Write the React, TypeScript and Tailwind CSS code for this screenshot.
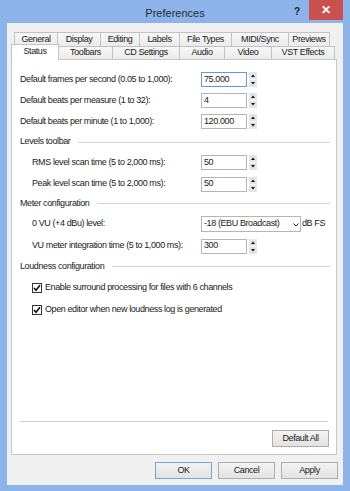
import React from "react";

const font = { fontFamily: '"Liberation Sans", Arial, sans-serif' };

function Spin() {
  return (
    <svg width="8" height="15" viewBox="0 0 8 15" className="ml-[2px] shrink-0">
      <rect x="0" y="0" width="8" height="7" fill="#e4e4e4" />
      <rect x="0" y="8" width="8" height="7" fill="#e4e4e4" />
      <path d="M2 5 L4 2.5 L6 5 Z" fill="#111" />
      <path d="M2 10 L4 12.5 L6 10 Z" fill="#111" />
    </svg>
  );
}

function NumRow({ label, value, indent = false, focus = false, h }: { label: string; value: string; indent?: boolean; focus?: boolean; h: string }) {
  return (
    <div className={`flex items-center ${h}`}>
      <div className={indent ? "w-[189px] pl-[20px]" : "w-[189px] pl-[8px]"}>{label}</div>
      <div
        className={`w-[46px] h-[15px] bg-white border flex items-center pl-[2px] ${focus ? "border-[#5a9ee0]" : "border-[#b5b5b5]"}`}
      >
        {value}
      </div>
      <Spin />
    </div>
  );
}

function Heading({ text, h }: { text: string; h: string }) {
  return (
    <div className={`flex items-center pl-[8px] pr-[6px] ${h}`}>
      <span>{text}</span>
      <div className="flex-1 h-px bg-[#d5d5d5] ml-[8px]" />
    </div>
  );
}

function Check({ label, h }: { label: string; h: string }) {
  return (
    <div className={`flex items-center pl-[20px] ${h}`}>
      <div className="w-[10px] h-[10px] border border-[#333] bg-white flex items-center justify-center">
        <svg width="8" height="8" viewBox="0 0 8 8">
          <path d="M1 4 L3 6.3 L7 1.2" stroke="#111" strokeWidth="1.6" fill="none" />
        </svg>
      </div>
      <span className="ml-[3px]">{label}</span>
    </div>
  );
}

const row1 = [
  ["General", "w-[43px]"],
  ["Display", "w-[43px]"],
  ["Editing", "w-[39px]"],
  ["Labels", "w-[40px]"],
  ["File Types", "w-[52px]"],
  ["MIDI/Sync", "w-[57px]"],
  ["Previews", "w-[42px]"],
];

const row2 = [
  ["Toolbars", "w-[54px]"],
  ["CD Settings", "w-[67px]"],
  ["Audio", "w-[45px]"],
  ["Video", "w-[47px]"],
  ["VST Effects", "w-[63px]"],
];

export default function App() {
  return (
    <div
      className="w-[350px] h-[491px] bg-[#8db4ea] flex flex-col text-[9px] tracking-[-0.4px] text-[#1a1a1a] overflow-hidden"
      style={font}
    >
      {/* Title bar */}
      <div className="h-[23px] grid grid-cols-[1fr_auto_1fr] shrink-0">
        <div />
        <div className="text-[11px] tracking-normal text-[#2b2b2b] pt-[5px]">Preferences</div>
        <div className="flex justify-end items-start pr-[7px]">
          <span className="text-[10px] font-bold text-[#222] mt-[4px] mr-[9px] tracking-normal">?</span>
          <div className="w-[34px] h-[20px] bg-[#c9504d] flex items-center justify-center text-white text-[12px] font-bold tracking-normal">
            ✕
          </div>
        </div>
      </div>

      {/* Dialog body */}
      <div className="mx-[7px] mb-[6px] flex-1 bg-[#f0f0f0] flex flex-col">
        {/* Tabs */}
        <div className="pt-[9px]">
          <div className="flex ml-[7px] h-[14px]">
            {row1.map(([t, w], i) => (
              <div
                key={t}
                className={`${w} h-full border-t border-l border-[#c2c2c2] bg-gradient-to-b from-[#f7f7f7] to-[#ebebeb] flex items-center justify-center ${i === row1.length - 1 ? "border-r" : ""}`}
              >
                {t}
              </div>
            ))}
          </div>
          <div className="flex ml-[4px] h-[13px] items-end relative z-10">
            <div className="w-[48px] h-[16px] -mt-[3px] bg-white border-t border-l border-r border-[#c2c2c2] flex items-center justify-center mb-[-1px] pb-[2px]">
              Status
            </div>
            {row2.map(([t, w]) => (
              <div
                key={t}
                className={`${w} h-[13px] border-t border-r border-[#c2c2c2] bg-gradient-to-b from-[#f7f7f7] to-[#ebebeb] flex items-center justify-center`}
              >
                {t}
              </div>
            ))}
          </div>
        </div>

        {/* Panel */}
        <div className="ml-[4px] w-[326px] h-[396px] border border-[#c8c8c8] bg-white flex flex-col pt-[9px]">
          <NumRow h="h-[21px]" label="Default frames per second (0.05 to 1,000):" value="75.000" focus />
          <NumRow h="h-[21px]" label="Default beats per measure (1 to 32):" value="4" />
          <NumRow h="h-[21px]" label="Default beats per minute (1 to 1,000):" value="120.000" />
          <Heading h="h-[20px]" text="Levels toolbar" />
          <NumRow h="h-[21px]" indent label="RMS level scan time (5 to 2,000 ms):" value="50" />
          <NumRow h="h-[22px]" indent label="Peak level scan time (5 to 2,000 ms):" value="50" />
          <Heading h="h-[17px]" text="Meter configuration" />
          <div className="flex items-center h-[23px]">
            <div className="w-[189px] pl-[20px]">0 VU (+4 dBu) level:</div>
            <div className="w-[100px] h-[16px] border border-[#b5b5b5] bg-white flex items-center pl-[2px] relative">
              <span>-18 (EBU Broadcast)</span>
              <svg width="6" height="4" viewBox="0 0 6 4" className="absolute right-[1px] top-[6px]">
                <path d="M0.5 0.5 L3 3 L5.5 0.5" stroke="#222" strokeWidth="1" fill="none" />
              </svg>
            </div>
            <span className="ml-[1px]">dB FS</span>
          </div>
          <NumRow h="h-[22px]" indent label="VU meter integration time (5 to 1,000 ms):" value="300" />
          <Heading h="h-[19px]" text="Loudness configuration" />
          <Check h="h-[23px]" label="Enable surround processing for files with 6 channels" />
          <Check h="h-[22px]" label="Open editor when new loudness log is generated" />

          <div className="flex-1" />
          <div className="mx-[8px] h-px bg-[#d0d0d0]" />
          <div className="flex justify-end mt-[8px] mb-[7px] mr-[7px]">
            <button className="w-[57px] h-[17px] border border-[#adadad] bg-gradient-to-b from-[#f2f2f2] to-[#e3e3e3] flex items-center justify-center">
              Default All
            </button>
          </div>
        </div>

        {/* Footer buttons */}
        <div className="flex justify-end gap-[6px] mt-[7px] mr-[5px]">
          <button className="w-[57px] h-[17px] border border-[#6fa8e0] bg-gradient-to-b from-[#f2f2f2] to-[#e3e3e3] flex items-center justify-center">
            OK
          </button>
          <button className="w-[57px] h-[17px] border border-[#adadad] bg-gradient-to-b from-[#f2f2f2] to-[#e3e3e3] flex items-center justify-center">
            Cancel
          </button>
          <button className="w-[57px] h-[17px] border border-[#adadad] bg-gradient-to-b from-[#f2f2f2] to-[#e3e3e3] flex items-center justify-center">
            Apply
          </button>
        </div>
      </div>
    </div>
  );
}
